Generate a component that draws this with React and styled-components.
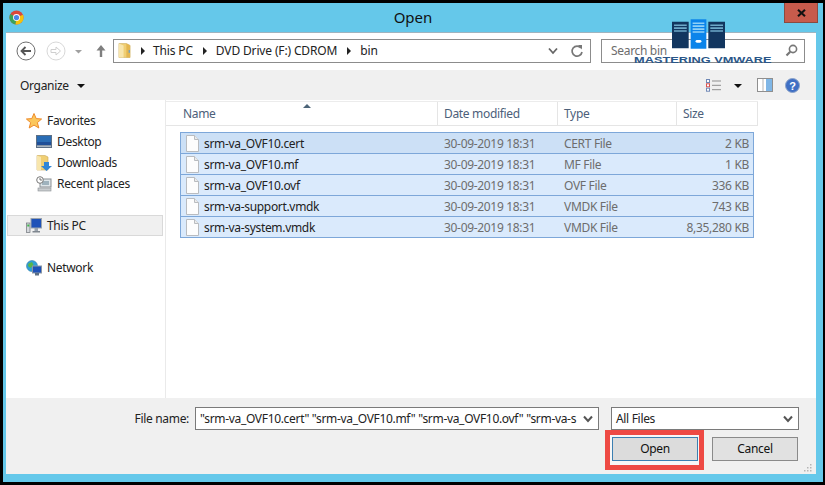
import React from 'react';
import styled, { createGlobalStyle } from 'styled-components';

const GlobalStyle = createGlobalStyle`
  html, body {
    margin: 0;
    padding: 0;
    background: #000;
  }
  * {
    box-sizing: border-box;
  }
`;

const Page = styled.div`
  position: relative;
  width: 825px;
  height: 485px;
  padding: 3px 2px 3px 3px;
  background: #000;
  font-family: 'Noto Sans', 'Open Sans', sans-serif;
  font-size: 12px;
  letter-spacing: -0.32px;
  color: #1a1a1a;
  overflow: hidden;
`;
const Window = styled.div`
  display: flex;
  flex-direction: column;
  height: 100%;
  background: #65c8ea;
`;
const TitleBar = styled.div`
  position: relative;
  flex: none;
  display: flex;
  align-items: center;
  justify-content: center;
  height: 29px;
  padding-bottom: 2px;
  font-size: 15px;
  letter-spacing: 0;
  color: #111;
`;
const AppIcon = styled.svg`
  position: absolute;
  left: 6px;
  top: 7px;
`;
const CloseButton = styled.div`
  position: absolute;
  right: 5px;
  top: 0;
  width: 34px;
  height: 20px;
  display: flex;
  align-items: center;
  justify-content: center;
  background: #c75b4c;
  border: 1px solid #8a4a40;
  border-top: none;
`;
const Client = styled.div`
  flex: 1;
  display: flex;
  flex-direction: column;
  margin: 0 7px 8px 3px;
  background: #fff;
  border-top: 1px solid #9fb4bf;
  min-height: 0;
`;
const AddressRow = styled.div`
  flex: none;
  display: flex;
  align-items: center;
  height: 37px;
  padding: 0 11px 2px 10px;
`;
const NavGroup = styled.div`
  flex: none;
  width: 97px;
  display: flex;
  align-items: center;
`;
const Field = styled.div`
  display: flex;
  align-items: center;
  height: 24px;
  border: 1px solid #8c8c8c;
  background: #fff;
`;
const AddressBox = styled(Field)`
  flex: none;
  width: 478px;
  padding: 0 6px 0 4px;
`;
const Crumb = styled.span`
  color: #222;
  letter-spacing: -0.15px;
  margin-right: ${p => p.$gap}px;
  white-space: nowrap;
`;
const CrumbArrow = styled.span`
  width: 0;
  height: 0;
  margin-right: ${p => p.$gap}px;
  border-left: 4px solid #222;
  border-top: 4px solid transparent;
  border-bottom: 4px solid transparent;
`;
const Spacer = styled.div`
  flex: 1;
`;
const SearchBox = styled(Field)`
  flex: none;
  width: 204px;
  margin-left: 10px;
  padding: 0 6px 0 9px;
  color: #6d6d6d;
`;
const Toolbar = styled.div`
  flex: none;
  display: flex;
  align-items: center;
  height: 30px;
  padding: 0 16px 0 14px;
  background: #f0f0f0;
  color: #222;
`;
const ToolArrow = styled.span`
  width: 0;
  height: 0;
  margin: 1px ${p => p.$right}px 0 ${p => p.$left}px;
  border-top: 4px solid #111;
  border-left: 4px solid transparent;
  border-right: 4px solid transparent;
`;
const Main = styled.div`
  flex: 1;
  display: flex;
  min-height: 0;
`;
const Sidebar = styled.div`
  flex: none;
  width: 160px;
  padding: 10px 0 0 1px;
  border-right: 1px solid #eaeaea;
`;
const NavItem = styled.div`
  display: flex;
  align-items: center;
  gap: 5px;
  height: 21px;
  width: 156px;
  margin-bottom: ${p => p.$after || 0}px;
  padding-left: ${p => (p.$child ? 28 : 18)}px;
  color: #222;
  background: ${p => (p.$active ? '#f0f0f0' : 'transparent')};
  border: 1px solid ${p => (p.$active ? '#d9d9d9' : 'transparent')};
`;
const Files = styled.div`
  flex: 1;
  min-width: 0;
`;
const Header = styled.div`
  position: relative;
  display: grid;
  grid-template-columns: 272px 120px 119px 81px;
  width: 592px;
  height: 25px;
  margin-top: 1px;
  border-top: 1px solid #ececec;
  border-bottom: 1px solid #e5e5e5;
  color: #4c607a;
`;
const HeaderCell = styled.div`
  display: flex;
  align-items: center;
  padding-left: ${p => (p.$first ? 17 : 6)}px;
  border-right: 1px solid #e5e5e5;
`;
const SortArrow = styled.span`
  position: absolute;
  left: 137px;
  top: 2px;
  width: 0;
  height: 0;
  border-bottom: 4px solid #4c6478;
  border-left: 4px solid transparent;
  border-right: 4px solid transparent;
`;
const List = styled.div`
  width: 574px;
  margin: 6px 0 0 14px;
  border: 1px solid #7da7d9;
  border-bottom: none;
`;
const Row = styled.div`
  display: grid;
  grid-template-columns: 257px 120px 119px 1fr;
  height: 21px;
  background: ${p => (p.$focus ? '#cce0f6' : '#daeafc')};
  border-bottom: 1px solid #7da7d9;
`;
const NameCell = styled.div`
  display: flex;
  align-items: center;
  gap: 5px;
  padding-left: 5px;
  color: #222;
`;
const Cell = styled.div`
  display: flex;
  align-items: center;
  justify-content: ${p => (p.$right ? 'flex-end' : 'flex-start')};
  padding: 0 ${p => (p.$right ? 4 : 0)}px 0 ${p => (p.$right ? 0 : 6)}px;
  color: #6d6d6d;
`;
const Footer = styled.div`
  position: relative;
  flex: none;
  height: 76px;
  padding: 9px 17px 0 0;
  background: #f0f0f0;
`;
const FooterRow = styled.div`
  display: flex;
  align-items: center;
  justify-content: flex-end;
  gap: ${p => p.$gap}px;
`;
const FieldLabel = styled.label`
  color: #222;
  margin-right: -6px;
`;
const Combo = styled.div`
  display: flex;
  align-items: center;
  justify-content: space-between;
  width: ${p => p.$width}px;
  height: 23px;
  padding: 0 4px;
  background: #fff;
  border: 1px solid #7a7a7a;
  color: #222;
  overflow: hidden;
`;
const ComboText = styled.span`
  flex: 1;
  min-width: 0;
  white-space: nowrap;
`;
const Buttons = styled(FooterRow)`
  margin-top: 7px;
  padding-right: 1px;
`;
const Highlight = styled.div`
  position: relative;
  &::before {
    content: '';
    position: absolute;
    left: -7px;
    right: -6px;
    top: -7px;
    bottom: -9px;
    background: #f7f7f7;
    border: 5px solid #ee4a44;
  }
`;
const Button = styled.button`
  position: relative;
  display: block;
  width: 86px;
  height: 24px;
  padding: 0 0 1px;
  font: inherit;
  letter-spacing: inherit;
  color: #111;
  background: ${p => (p.$primary ? '#dcdcdc' : '#e1e1e1')};
  border: 1px solid ${p => (p.$primary ? '#3c7fb1' : '#8a8a8a')};
`;
const Grip = styled.svg`
  position: absolute;
  right: 4px;
  bottom: 2px;
`;
const Watermark = styled.div`
  position: absolute;
  left: 633px;
  top: 19px;
  width: 140px;
  display: flex;
  flex-direction: column;
  align-items: center;
  pointer-events: none;
`;
const LogoMark = styled.svg`
  margin-right: 10px;
`;
const WatermarkText = styled.div`
  margin-top: 7px;
  font-family: 'Liberation Sans', sans-serif;
  font-size: 8.5px;
  line-height: 7px;
  font-weight: 700;
  letter-spacing: 0;
  white-space: nowrap;
  color: #2a5688;
  transform: scaleX(1.5);
`;

const files = [
  { name: 'srm-va_OVF10.cert', type: 'CERT File', size: '2 KB' },
  { name: 'srm-va_OVF10.mf', type: 'MF File', size: '1 KB' },
  { name: 'srm-va_OVF10.ovf', type: 'OVF File', size: '336 KB' },
  { name: 'srm-va-support.vmdk', type: 'VMDK File', size: '743 KB' },
  { name: 'srm-va-system.vmdk', type: 'VMDK File', size: '8,35,280 KB' }
];

const ChromeIcon = () => (
  <AppIcon width="15" height="15" viewBox="0 0 16 16">
    <circle cx="8" cy="8" r="7.5" fill="#d9483b" />
    <path d="M8 8 L1.5 4.2 A7.5 7.5 0 0 0 7 15.4 Z" fill="#3ba458" />
    <path d="M8 8 L14.9 5 A7.5 7.5 0 0 1 7 15.4 Z" fill="#f4c20d" />
    <circle cx="8" cy="8" r="3.7" fill="#fff" />
    <circle cx="8" cy="8" r="2.8" fill="#4a86e8" />
  </AppIcon>
);

const CloseGlyph = () => (
  <svg width="9" height="8" viewBox="0 0 9 8">
    <path d="M1 0.8 L8 7.2 M8 0.8 L1 7.2" stroke="#111" strokeWidth="2.1" />
  </svg>
);

const BackButton = () => (
  <svg width="20" height="20" viewBox="0 0 20 20">
    <circle cx="10" cy="10" r="9" fill="#fff" stroke="#6e6e6e" />
    <path d="M15 10 H6 M9.5 6 L5.5 10 L9.5 14" fill="none" stroke="#555" strokeWidth="1.8" />
  </svg>
);

const ForwardButton = () => (
  <svg width="20" height="20" viewBox="0 0 20 20">
    <circle cx="10" cy="10" r="9" fill="#fff" stroke="#d8d8d8" />
    <path d="M5 8.5 H10 V6 L14.5 10 L10 14 V11.5 H5 Z" fill="#fff" stroke="#cfcfcf" />
  </svg>
);

const NavControls = () => (
  <NavGroup>
    <BackButton />
    <svg width="10" height="20" />
    <ForwardButton />
    <svg width="18" height="20" viewBox="0 0 18 20">
      <path d="M9 9 H16 L12.5 12.5 Z" fill="#a0a0a0" />
    </svg>
    <svg width="29" height="20" viewBox="0 0 29 20">
      <path d="M17 4 L12.5 9.5 H15.8 V16 H18.2 V9.5 H21.5 Z" fill="#7f7f7f" />
    </svg>
  </NavGroup>
);

const FolderIcon = () => (
  <svg width="13" height="17" viewBox="0 0 14 17" style={{ marginRight: 10, flex: 'none' }}>
    <path d="M1 1 H9 L13 3 V16 H1 Z" fill="#f0cf74" stroke="#c9a95a" strokeWidth="0.6" />
    <path d="M1 1 L6 3 V16 H1 Z" fill="#f8e6ad" />
    <path d="M9 1 L13 3 V16 H9 Z" fill="#e3b650" />
    <rect x="11.5" y="8" width="1.2" height="3" fill="#5a9bd5" />
  </svg>
);

const RefreshIcon = () => (
  <svg width="14" height="14" viewBox="0 0 14 14">
    <path d="M11 4 A5 5 0 1 0 12 8" fill="none" stroke="#777" strokeWidth="1.7" />
    <path d="M8 1 L12 1 L12 5.5 Z" fill="#777" />
  </svg>
);

const SmallChevron = () => (
  <svg width="10" height="8" viewBox="0 0 10 8">
    <path d="M1 1.5 L5 6 L9 1.5" fill="none" stroke="#666" strokeWidth="1.8" />
  </svg>
);

const SearchIcon = () => (
  <svg width="13" height="13" viewBox="0 0 13 13">
    <circle cx="8" cy="5" r="3.6" fill="none" stroke="#777" strokeWidth="1.6" />
    <path d="M5.2 7.8 L1.5 11.5" stroke="#777" strokeWidth="2.2" />
  </svg>
);

const ViewIcon = () => (
  <svg width="16" height="13" viewBox="0 0 16 13">
    <rect x="0.5" y="0.5" width="3" height="3" fill="#fff" stroke="#6f88b5" />
    <rect x="0.5" y="4.8" width="3" height="3" fill="#fff" stroke="#d9534f" />
    <rect x="0.5" y="9.2" width="3" height="3" fill="#fff" stroke="#6f88b5" />
    <path d="M6 2 H15 M6 6.3 H15 M6 10.7 H15" stroke="#8f8f8f" strokeWidth="1" />
  </svg>
);

const PaneIcon = () => (
  <svg width="16" height="14" viewBox="0 0 16 14">
    <rect x="0.5" y="0.5" width="15" height="13" fill="#fff" stroke="#8f8f8f" />
    <rect x="9" y="1" width="6" height="12" fill="#7fb6e6" />
    <path d="M6 1 V13" stroke="#b5b5b5" />
  </svg>
);

const HelpIcon = () => (
  <svg width="15" height="15" viewBox="0 0 15 15">
    <circle cx="7.5" cy="7.5" r="7" fill="#3f6fc4" stroke="#8aa2c9" />
    <text x="7.5" y="11.5" textAnchor="middle" fontSize="11" fontWeight="700" fill="#fff" fontFamily="Liberation Sans">?</text>
  </svg>
);

const StarIcon = () => (
  <svg width="16" height="16" viewBox="0 0 16 16">
    <path d="M8 0.5 L10.2 5.6 L15.6 6 L11.4 9.6 L12.8 15 L8 12.1 L3.2 15 L4.6 9.6 L0.4 6 L5.8 5.6 Z" fill="#fbc75c" stroke="#ee8a2a" strokeWidth="1" />
  </svg>
);

const DesktopIcon = () => (
  <svg width="16" height="13" viewBox="0 0 16 13">
    <rect x="0" y="0" width="16" height="13" fill="#5c6f85" />
    <rect x="1" y="1" width="14" height="9" fill="#2a6db5" />
    <rect x="1" y="7" width="14" height="3" fill="#1f4f98" />
    <rect x="1" y="10.5" width="14" height="1.5" fill="#a9b6c4" />
  </svg>
);

const DownloadsIcon = () => (
  <svg width="16" height="16" viewBox="0 0 16 16">
    <path d="M1 0.5 H9 L12 2 V15 H1 Z" fill="#f0cf74" stroke="#c9a95a" strokeWidth="0.6" />
    <path d="M1 0.5 L5 2 V15 H1 Z" fill="#f8e6ad" />
    <path d="M8 7 H13 V11 H16 L10.5 16 L5 11 H8 Z" fill="#2f86d6" />
  </svg>
);

const RecentIcon = () => (
  <svg width="16" height="16" viewBox="0 0 16 16">
    <rect x="4" y="3" width="11" height="8" fill="#dfe6ea" stroke="#8a8f94" />
    <rect x="6" y="5" width="7" height="4" fill="#9fb2bd" />
    <rect x="2" y="12" width="13" height="3" fill="#c9cccf" stroke="#8a8f94" strokeWidth="0.6" />
    <circle cx="4" cy="4" r="3.3" fill="#fff" stroke="#777" />
    <path d="M4 2 V4 H6" fill="none" stroke="#555" strokeWidth="0.8" />
  </svg>
);

const PcIcon = () => (
  <svg width="16" height="15" viewBox="0 0 16 15">
    <rect x="0.5" y="5" width="3.5" height="9.5" fill="#d5d8dc" stroke="#6d7278" strokeWidth="0.7" />
    <rect x="1.3" y="6.5" width="2" height="2" fill="#3fb54a" />
    <rect x="5" y="0.5" width="10.5" height="9.5" fill="#1f52b8" stroke="#9aa3ad" />
    <rect x="8.5" y="10" width="3.5" height="3" fill="#9aa3ad" />
    <rect x="6.5" y="13" width="7.5" height="1.5" fill="#7f868e" />
  </svg>
);

const NetworkIcon = () => (
  <svg width="16" height="16" viewBox="0 0 16 16">
    <circle cx="6" cy="6" r="5.5" fill="#2f9fd8" stroke="#3a7fa8" strokeWidth="0.6" />
    <path d="M2.5 3.5 L6 2 L7.5 5 L4.5 8 L2 6 Z" fill="#58b54a" />
    <rect x="6.5" y="6" width="9" height="7" fill="#1f52b8" stroke="#8c97a3" />
    <rect x="9" y="13" width="4" height="2.5" fill="#5c6f85" />
  </svg>
);

const FileIcon = () => (
  <svg width="13" height="17" viewBox="0 0 13 17" style={{ flex: 'none' }}>
    <path d="M0.5 0.5 H8.5 L12.5 4.5 V16.5 H0.5 Z" fill="#fdfdfd" stroke="#b9bcc0" />
    <path d="M8.5 0.5 V4.5 H12.5" fill="#ebebeb" stroke="#b9bcc0" />
  </svg>
);

const ServerLogo = () => (
  <LogoMark width="53" height="31" viewBox="0 0 54 31">
    <rect x="0" y="2.5" width="17" height="27" fill="#12365f" />
    <rect x="19" y="0" width="16" height="30" fill="#0b84ea" />
    <rect x="37" y="2.5" width="17" height="27" fill="#12365f" />
    <path d="M2 6 H15 M2 9 H15 M2 12 H15 M39 6 H52 M39 9 H52 M39 12 H52" stroke="#6ea9c9" strokeWidth="1.6" />
    <path d="M21 4 H33 M21 7 H33 M21 10 H33 M21 13 H33" stroke="#8fd0f7" strokeWidth="1.6" />
    <rect x="24" y="21" width="6" height="3" rx="1.5" fill="#fff" />
  </LogoMark>
);

const ComboChevron = () => (
  <svg width="10" height="8" viewBox="0 0 10 8" style={{ flex: 'none', marginRight: 1 }}>
    <path d="M1 1.5 L5 6 L9 1.5" fill="none" stroke="#555" strokeWidth="2" />
  </svg>
);

const GripDots = () => (
  <Grip width="9" height="9" viewBox="0 0 9 9">
    <path d="M7 1 h1.5 v1.5 h-1.5 Z M4 4 h1.5 v1.5 h-1.5 Z M7 4 h1.5 v1.5 h-1.5 Z M1 7 h1.5 v1.5 h-1.5 Z M4 7 h1.5 v1.5 h-1.5 Z M7 7 h1.5 v1.5 h-1.5 Z" fill="#b5b5b5" />
  </Grip>
);

const App = () => {
  return (
    <Page>
      <GlobalStyle />
      <Window>
        <TitleBar>
          <ChromeIcon />
          Open
          <CloseButton>
            <CloseGlyph />
          </CloseButton>
        </TitleBar>
        <Client>
          <AddressRow>
            <NavControls />
            <AddressBox>
              <FolderIcon />
              <CrumbArrow $gap={8} />
              <Crumb $gap={10}>This PC</Crumb>
              <CrumbArrow $gap={9} />
              <Crumb $gap={10}>DVD Drive (F:) CDROM</Crumb>
              <CrumbArrow $gap={9} />
              <Crumb $gap={0}>bin</Crumb>
              <Spacer />
              <SmallChevron />
              <svg width="12" height="8" />
              <RefreshIcon />
            </AddressBox>
            <SearchBox>
              Search bin
              <Spacer />
              <SearchIcon />
            </SearchBox>
          </AddressRow>
          <Toolbar>
            Organize
            <ToolArrow $left={8} $right={0} />
            <Spacer />
            <ViewIcon />
            <ToolArrow $left={12} $right={15} />
            <PaneIcon />
            <svg width="12" height="8" />
            <HelpIcon />
          </Toolbar>
          <Main>
            <Sidebar>
              <NavItem>
                <StarIcon />
                Favorites
              </NavItem>
              <NavItem $child>
                <DesktopIcon />
                Desktop
              </NavItem>
              <NavItem $child>
                <DownloadsIcon />
                Downloads
              </NavItem>
              <NavItem $child $after={21}>
                <RecentIcon />
                Recent places
              </NavItem>
              <NavItem $active $after={21}>
                <PcIcon />
                This PC
              </NavItem>
              <NavItem>
                <NetworkIcon />
                Network
              </NavItem>
            </Sidebar>
            <Files>
              <Header>
                <SortArrow />
                <HeaderCell $first>Name</HeaderCell>
                <HeaderCell>Date modified</HeaderCell>
                <HeaderCell>Type</HeaderCell>
                <HeaderCell>Size</HeaderCell>
              </Header>
              <List>
                {files.map((file, i) => (
                  <Row key={file.name} $focus={i === 0}>
                    <NameCell>
                      <FileIcon />
                      {file.name}
                    </NameCell>
                    <Cell>30-09-2019 18:31</Cell>
                    <Cell>{file.type}</Cell>
                    <Cell $right>{file.size}</Cell>
                  </Row>
                ))}
              </List>
            </Files>
          </Main>
          <Footer>
            <FooterRow $gap={12}>
              <FieldLabel>File name:</FieldLabel>
              <Combo $width={404}>
                <ComboText>"srm-va_OVF10.cert" "srm-va_OVF10.mf" "srm-va_OVF10.ovf" "srm-va-s</ComboText>
                <ComboChevron />
              </Combo>
              <Combo $width={188}>
                <ComboText>All Files</ComboText>
                <ComboChevron />
              </Combo>
            </FooterRow>
            <Buttons $gap={14}>
              <Highlight>
                <Button $primary>Open</Button>
              </Highlight>
              <Button>Cancel</Button>
            </Buttons>
            <GripDots />
          </Footer>
        </Client>
      </Window>
      <Watermark>
        <ServerLogo />
        <WatermarkText>MASTERING VMWARE</WatermarkText>
      </Watermark>
    </Page>
  );
};

export default App;
